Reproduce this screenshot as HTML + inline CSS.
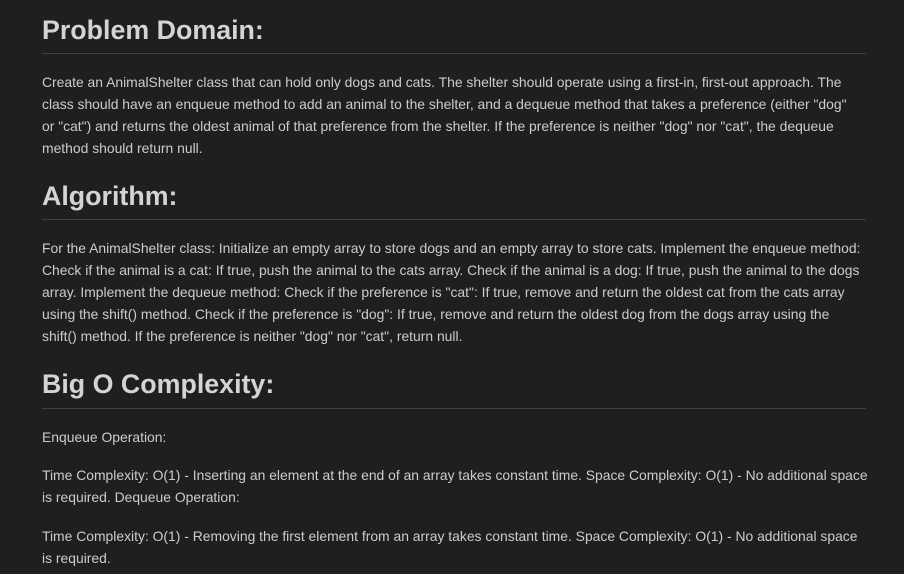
<!DOCTYPE html>
<html><head><meta charset="utf-8"><style>
html,body{margin:0;padding:0;background:#1f1f1f;width:904px;height:574px;overflow:hidden}
body{font-family:"Liberation Sans",sans-serif;color:#cccccc}
.h{position:absolute;left:42px;font-size:26.8px;font-weight:bold;color:#d4d4d4;line-height:32px;white-space:nowrap}
.hr{position:absolute;left:42px;width:824px;height:1px;background:#3f3f3f}
.l{position:absolute;left:42px;font-size:13.9px;line-height:16px;white-space:nowrap}
</style></head><body>
<div class="h" style="top:14px">Problem Domain:</div>
<div class="hr" style="top:53px"></div>
<div class="l" style="top:74px">Create an AnimalShelter class that can hold only dogs and cats. The shelter should operate using a first-in, first-out approach. The</div>
<div class="l" style="top:96px">class should have an enqueue method to add an animal to the shelter, and a dequeue method that takes a preference (either "dog"</div>
<div class="l" style="top:118px">or "cat") and returns the oldest animal of that preference from the shelter. If the preference is neither "dog" nor "cat", the dequeue</div>
<div class="l" style="top:140px">method should return null.</div>

<div class="h" style="top:180px">Algorithm:</div>
<div class="hr" style="top:219px"></div>
<div class="l" style="top:240px">For the AnimalShelter class: Initialize an empty array to store dogs and an empty array to store cats. Implement the enqueue method:</div>
<div class="l" style="top:262px">Check if the animal is a cat: If true, push the animal to the cats array. Check if the animal is a dog: If true, push the animal to the dogs</div>
<div class="l" style="top:284px">array. Implement the dequeue method: Check if the preference is "cat": If true, remove and return the oldest cat from the cats array</div>
<div class="l" style="top:306px">using the shift() method. Check if the preference is "dog": If true, remove and return the oldest dog from the dogs array using the</div>
<div class="l" style="top:328px">shift() method. If the preference is neither "dog" nor "cat", return null.</div>

<div class="h" style="top:368px">Big O Complexity:</div>
<div class="hr" style="top:408px"></div>
<div class="l" style="top:429px">Enqueue Operation:</div>
<div class="l" style="top:467px">Time Complexity: O(1) - Inserting an element at the end of an array takes constant time. Space Complexity: O(1) - No additional space</div>
<div class="l" style="top:489px">is required. Dequeue Operation:</div>
<div class="l" style="top:528px">Time Complexity: O(1) - Removing the first element from an array takes constant time. Space Complexity: O(1) - No additional space</div>
<div class="l" style="top:550px">is required.</div>
</body></html>
